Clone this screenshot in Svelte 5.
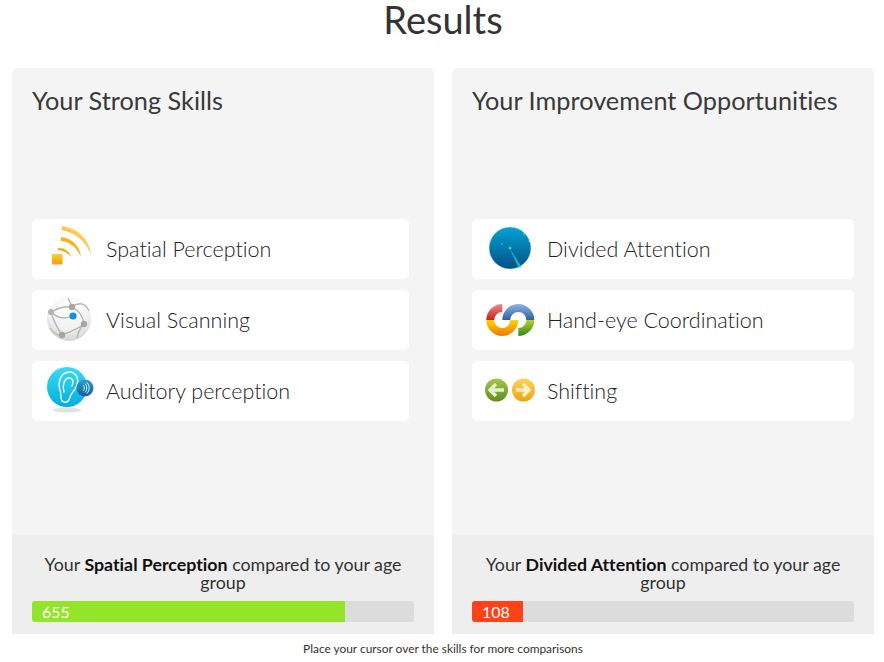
<script>
  const panels = [
    { title: 'Your Strong Skills', rowWidth: 'narrow', skills: [
      { name: 'Spatial Perception', icon: 'wifi' },
      { name: 'Visual Scanning', icon: 'net' },
      { name: 'Auditory perception', icon: 'ear' }
    ], focus: 'Spatial Perception', score: 655, pct: 82, color: '#94e52a' },
    { title: 'Your Improvement Opportunities', rowWidth: 'wide', skills: [
      { name: 'Divided Attention', icon: 'radar' },
      { name: 'Hand-eye Coordination', icon: 'rings' },
      { name: 'Shifting', icon: 'arrows' }
    ], focus: 'Divided Attention', score: 108, pct: 13.4, color: '#fb4219' }
  ];
</script>

<svg width="0" height="0" class="defs">
  <defs>
    <linearGradient id="orange" x1="0" y1="0" x2="0" y2="1"><stop offset="0" stop-color="#ffd03a"/><stop offset="1" stop-color="#f59a0c"/></linearGradient>
    <radialGradient id="arcfade" gradientUnits="userSpaceOnUse" cx="12" cy="38" r="42"><stop offset="0.2" stop-color="#f6a100"/><stop offset="0.75" stop-color="#fbb81c"/><stop offset="1" stop-color="#fff0c4"/></radialGradient>
    <radialGradient id="sphere" cx="0.5" cy="0.25" r="0.85"><stop offset="0" stop-color="#ffffff"/><stop offset="0.55" stop-color="#f2f2f2"/><stop offset="1" stop-color="#c9c9c9"/></radialGradient>
    <linearGradient id="cyan" x1="0" y1="0" x2="0" y2="1"><stop offset="0" stop-color="#3adbf2"/><stop offset="1" stop-color="#02aee0"/></linearGradient>
    <linearGradient id="deep" x1="0" y1="0" x2="0" y2="1"><stop offset="0" stop-color="#2f9fd0"/><stop offset="1" stop-color="#155f92"/></linearGradient>
    <linearGradient id="radar" x1="0" y1="0" x2="0" y2="1"><stop offset="0" stop-color="#04a2d4"/><stop offset="1" stop-color="#054f86"/></linearGradient>
    <linearGradient id="green" x1="0" y1="0" x2="0" y2="1"><stop offset="0" stop-color="#a5c84a"/><stop offset="1" stop-color="#5f8c22"/></linearGradient>
    <linearGradient id="amber" x1="0" y1="0" x2="0" y2="1"><stop offset="0" stop-color="#fbd55a"/><stop offset="1" stop-color="#eda40f"/></linearGradient>
    <linearGradient id="red" x1="0" y1="0" x2="0" y2="1"><stop offset="0" stop-color="#f08a88"/><stop offset="1" stop-color="#c91f1f"/></linearGradient>
    <linearGradient id="yo" x1="0" y1="0" x2="0" y2="1"><stop offset="0" stop-color="#ffd400"/><stop offset="1" stop-color="#ee7a00"/></linearGradient>
    <linearGradient id="bl" x1="0" y1="0" x2="0" y2="1"><stop offset="0" stop-color="#8fb6e4"/><stop offset="1" stop-color="#2d5f9e"/></linearGradient>
    <linearGradient id="gr" x1="0" y1="0" x2="0" y2="1"><stop offset="0" stop-color="#b8d238"/><stop offset="1" stop-color="#2f8a12"/></linearGradient>
  </defs>
</svg>

<main class="page">
  <h1>Results</h1>
  <div class="panels">
    {#each panels as p}
      <section class="panel">
        <div class="top">
          <h2>{p.title}</h2>
          <ul class="rows {p.rowWidth}">
            {#each p.skills as s}
              <li class="row {s.icon}">
                <svg class="icon" viewBox="0 0 50 50" width="50" height="50">
                  {#if s.icon === 'wifi'}
                    <path d="M14 24C21 24 26 28 27 33C24 29 20 27 14 26Z" fill="url(#arcfade)"/>
                    <path d="M17 13C28 14 36 22 37 33C33 24 27 18 17 17Z" fill="url(#arcfade)"/>
                    <path d="M18 2C33 3 46 15 47 31C42 18 33 9 18 6Z" fill="url(#arcfade)"/>
                    <rect x="8" y="30" width="10.500" height="10.500" fill="url(#orange)"/>
                  {:else if s.icon === 'net'}
                    <circle cx="25" cy="24" r="22" fill="url(#sphere)"/>
                    <path d="M7 17C14 13 21 11 28 12L24 3M28 12C34 15 39 21 40 29M7 17C10 27 13 33 18 40M18 40C26 37 34 34 40 29M28 12C36 6 42 9 45 16M40 29C36 33 34 38 33 43M18 40C14 41 9 38 6 33M7 17C14 24 22 24 29 21" fill="none" stroke="#b4b5ac" stroke-width="1.300"/>
                    <circle cx="28" cy="12" r="3.200" fill="#a6a79c"/>
                    <circle cx="7" cy="17" r="3" fill="#b3b4aa"/>
                    <circle cx="40" cy="29" r="3.200" fill="#a6a79c"/>
                    <circle cx="18" cy="40" r="3.200" fill="#a6a79c"/>
                    <circle cx="29" cy="21" r="3.600" fill="#0e8fe6"/>
                  {:else if s.icon === 'ear'}
                    <ellipse cx="23" cy="44" rx="14" ry="2.500" fill="#e2e2e2"/>
                    <circle cx="23" cy="21" r="20" fill="url(#cyan)"/>
                    <path d="M20 36C15 35 18 28 16 24C14 19 15 7 25 6C33 6 35 14 33 19C31 25 27 27 26 31C25 35 23 37 20 36M20 26C18 20 20 12 25 12C29 12 30 16 28 20" fill="none" stroke="#f1fdff" stroke-width="1.400" stroke-linecap="round"/>
                    <circle cx="41" cy="22" r="8.500" fill="url(#deep)"/>
                    <path d="M39 19a4 4 0 0 1 0 6M41 17.500a6.500 6.500 0 0 1 0 9M43 16.500a8 8 0 0 1 0 11" fill="none" stroke="#cdeffa" stroke-width="1"/>
                  {:else if s.icon === 'radar'}
                    <circle cx="25" cy="24" r="21" fill="url(#radar)" stroke="#cfe6ee" stroke-width="0.500"/>
                    <path d="M24.500 24L36.500 42.500L33.500 44Z" fill="#1fc9c0" opacity="0.800"/>
                    <circle cx="25" cy="24" r="1.500" fill="#18e6a0"/>
                    <circle cx="39" cy="10" r="0.800" fill="#6fd6ee"/><circle cx="17" cy="20" r="0.700" fill="#6fd6ee"/><circle cx="44" cy="17" r="0.600" fill="#bff"/>
                  {:else if s.icon === 'rings'}
                    <path d="M17.300 9A16 16 0 0 0 1.300 25H9.300A8 8 0 0 1 17.300 17Z" fill="url(#red)"/>
                    <path d="M1.300 25A16 16 0 0 0 33.300 25H25.300A8 8 0 0 1 9.300 25Z" fill="url(#yo)"/>
                    <path d="M17.300 25A16 16 0 0 1 49.300 25H41.300A8 8 0 0 0 25.300 25Z" fill="url(#bl)"/>
                    <path d="M49.300 25A16 16 0 0 1 33.300 41V33A8 8 0 0 0 41.300 25Z" fill="url(#gr)"/>
                  {:else}
                    <circle cx="11.500" cy="24" r="11.500" fill="url(#green)"/>
                    <path d="M19 24H6M11 18L5 24L11 30" fill="none" stroke="#e8eecb" stroke-width="3.400"/>
                    <circle cx="38.500" cy="24" r="11.500" fill="url(#amber)"/>
                    <path d="M31 24H44M38 18L44 24L38 30" fill="none" stroke="#fbf0c6" stroke-width="3.400"/>
                  {/if}
                </svg>
                <span class="name">{s.name}</span>
              </li>
            {/each}
          </ul>
        </div>
        <div class="foot">
          <p>Your <b>{p.focus}</b> compared to your age group</p>
          <div class="track">
            <div class="fill" style="width:{p.pct}%;background:{p.color}">{p.score}</div>
          </div>
        </div>
      </section>
    {/each}
  </div>
  <p class="hint">Place your cursor over the skills for more comparisons</p>
</main>

<style>
  :global(body) { margin: 0; background: #fff; font-family: Lato, "Open Sans", sans-serif; color: #333; font-variant-ligatures: none; }
  .defs { position: absolute; }
  .page { width: 884px; height: 662px; overflow: hidden; }
  h1 { margin: 0; height: 68px; padding-left: 2px; box-sizing: border-box; font-size: 38px; font-weight: 400; line-height: 38px; text-align: center; }
  .panels { display: flex; gap: 18px; padding: 0 10px 0 12px; }
  .panel { width: 422px; height: 566px; background: #f4f4f4; border-radius: 6px 6px 0 0; display: flex; flex-direction: column; }
  .top { flex: 1; padding: 0 20px; }
  h2 { margin: 0; padding-top: 18px; font-size: 25.300px; font-weight: 400; line-height: 29px; height: 133px; color: #3a3a3a; }
  .rows { list-style: none; margin: 0; padding: 0; display: flex; flex-direction: column; gap: 11px; }
  .rows.narrow { width: 377px; }
  .rows.wide { width: 382px; }
  .row { height: 60px; background: #fff; border-radius: 5px; display: flex; align-items: center; }
  .icon { flex: none; margin-left: 12px; }
  .name { margin-left: 12px; font-size: 21.500px; font-weight: 300; line-height: 26px; color: #222; }
  .rings .icon, .radar .icon, .arrows .icon { margin-left: 13px; }
  .foot { height: 99px; background: #eee; padding: 20px 20px 0; box-sizing: border-box; }
  .foot p { margin: 0; font-size: 17.800px; line-height: 18px; text-align: center; padding-bottom: 10px; }
  .foot b { font-weight: 700; color: #111; }
  .track { height: 21px; background: #dcdcdc; border-radius: 3px; overflow: hidden; }
  .fill { height: 100%; color: #fff; font-size: 16px; line-height: 21px; padding-left: 10px; box-sizing: border-box; }
  .hint { margin: 7px 0 0; padding-left: 2px; font-size: 11.900px; line-height: 16px; text-align: center; color: #333; }
</style>
